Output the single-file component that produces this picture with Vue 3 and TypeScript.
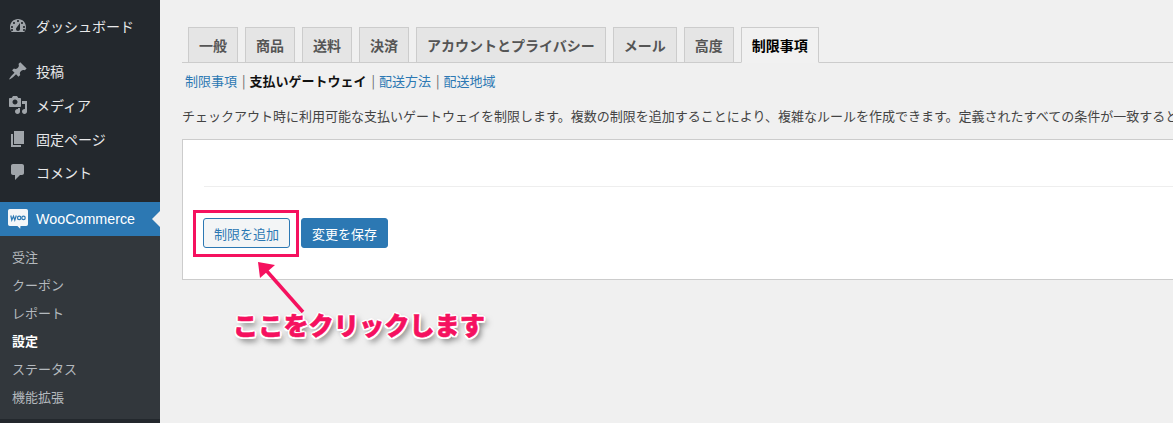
<script setup lang="ts">
const tabs = ['一般', '商品', '送料', '決済', 'アカウントとプライバシー', 'メール', '高度', '制限事項']
const subs = ['受注', 'クーポン', 'レポート', '設定', 'ステータス', '機能拡張']
</script>

<template>
  <div class="page">
    <aside class="side">
      <ul class="menu first">
        <li class="item">
          <svg class="ico" viewBox="0 0 20 20"><path fill-rule="evenodd" d="M3.760 16h12.480c1.100-1.370 1.760-3.110 1.760-5 0-4.420-3.580-8-8-8s-8 3.580-8 8c0 1.890.66 3.630 1.760 5zM10 4c.55 0 1 .45 1 1s-.45 1-1 1-1-.45-1-1 .45-1 1-1zM6 6c.55 0 1 .45 1 1s-.45 1-1 1-1-.45-1-1 .45-1 1-1zm8 0c.55 0 1 .45 1 1s-.45 1-1 1-1-.45-1-1 .45-1 1-1zm-5.370 5.550L12 7v6c0 1.100-.9 2-2 2s-2-.9-2-2c0-.57.24-1.080.63-1.450zM4 10c.55 0 1 .45 1 1s-.45 1-1 1-1-.45-1-1 .45-1 1-1zm12 0c.55 0 1 .45 1 1s-.45 1-1 1-1-.45-1-1 .45-1 1-1zm-12 3c.55 0 1 .45 1 1s-.45 1-1 1-1-.45-1-1 .45-1 1-1zm12 0c.55 0 1 .45 1 1s-.45 1-1 1-1-.45-1-1 .45-1 1-1z"/></svg>
          <span>ダッシュボード</span>
        </li>
      </ul>
      <ul class="menu second">
        <li class="item">
          <svg class="ico" viewBox="0 0 20 20"><path d="M10.440 3.020l1.820-1.820 6.360 6.350-1.830 1.820c-1.050-.68-2.480-.57-3.410.36l-.75.75c-.92.93-1.040 2.350-.35 3.410l-1.830 1.820-2.410-2.410-2.800 2.790c-.42.42-3.380 2.710-3.800 2.290s1.860-3.390 2.280-3.810l2.790-2.790L4.100 9.360l1.830-1.820c1.050.69 2.480.57 3.400-.36l.75-.75c.93-.92 1.050-2.350.36-3.410z"/></svg>
          <span>投稿</span>
        </li>
        <li class="item">
          <svg class="ico" viewBox="0 0 20 20"><path fill-rule="evenodd" d="M13 11V4c0-.55-.45-1-1-1h-1.670L9 1H5L3.670 3H2c-.55 0-1 .45-1 1v7c0 .55.45 1 1 1h10c.55 0 1-.45 1-1zM7 4.500c1.380 0 2.500 1.120 2.500 2.500S8.380 9.500 7 9.500 4.500 8.380 4.500 7 5.620 4.500 7 4.500zM14 6h5v10.500c0 1.380-1.120 2.500-2.500 2.500S14 17.880 14 16.500s1.120-2.500 2.500-2.500c.17 0 .34.020.5.050V9h-3V6zm-4 8.050V13h2v3.500c0 1.380-1.120 2.500-2.500 2.500S7 17.880 7 16.500 8.120 14 9.500 14c.17 0 .34.020.5.050z"/></svg>
          <span>メディア</span>
        </li>
        <li class="item">
          <svg class="ico" viewBox="0 0 20 20"><path d="M6 15V2h10v13H6zm-1 1h8v2H3V5h2v11z"/></svg>
          <span>固定ページ</span>
        </li>
        <li class="item">
          <svg class="ico" viewBox="0 0 20 20"><path d="M5 2h9c1.100 0 2 .9 2 2v7c0 1.100-.9 2-2 2h-2l-5 5v-5H5c-1.100 0-2-.9-2-2V4c0-1.100.9-2 2-2z"/></svg>
          <span>コメント</span>
        </li>
      </ul>
      <div class="woo">
        <svg class="woo-ico" viewBox="0 0 20 20">
          <path d="M1.800 0h16.400A1.800 1.800 0 0 1 20 1.800v13.400a1.800 1.800 0 0 1-1.800 1.800H12.500l-.3 2.800-2.800-2.800H1.800A1.800 1.800 0 0 1 0 15.200V1.800A1.800 1.800 0 0 1 1.800 0z" fill="#f4f6f8" />
          <path d="M2.800 6.500l1 4.500 1.700-3.800 1.300 3.800 1.500-4.500" fill="none" stroke="#2c78b3" stroke-width="1.200" />
          <circle cx="11.200" cy="8.900" r="1.700" fill="none" stroke="#2c78b3" stroke-width="1.200" />
          <circle cx="15.500" cy="8.900" r="1.700" fill="none" stroke="#2c78b3" stroke-width="1.200" />
        </svg>
        <span>WooCommerce</span>
        <i class="notch"></i>
      </div>
      <ul class="sub">
        <li v-for="s in subs" :key="s" :class="{ on: s === '設定' }">{{ s }}</li>
      </ul>
    </aside>

    <main class="main">
      <nav class="tabs">
        <a v-for="t in tabs" :key="t" class="tab" :class="{ active: t === '制限事項' }">{{ t }}</a>
      </nav>
      <div class="links">
        <a>制限事項</a><span class="sep">|</span><b>支払いゲートウェイ</b><span class="sep">|</span><a>配送方法</a><span class="sep">|</span><a>配送地域</a>
      </div>
      <p class="desc">チェックアウト時に利用可能な支払いゲートウェイを制限します。複数の制限を追加することにより、複雑なルールを作成できます。定義されたすべての条件が一致すると</p>
      <section class="card">
        <div class="rule"></div>
        <div class="actions">
          <button class="btn ghost">制限を追加</button>
          <button class="btn primary">変更を保存</button>
        </div>
      </section>
    </main>

    <div class="hl"></div>
    <svg class="arrow" viewBox="0 0 60 60">
      <path d="M49 54L11 11" stroke="#f5115f" stroke-width="3.500" fill="none" />
      <path d="M4 4l17 3L6 20z" fill="#f5115f" />
    </svg>
    <div class="note">ここをクリックします</div>
  </div>
</template>

<style>
html, body { margin: 0; background: #f0f0f0; }
</style>

<style scoped>
.page {
  position: relative;
  display: flex;
  width: 1173px;
  height: 423px;
  overflow: hidden;
  background: #f0f0f0;
  font-family: "Noto Sans CJK JP", "Liberation Sans", sans-serif;
}
.side {
  width: 160px;
  height: 423px;
  flex: none;
  background: #23282d;
  color: #eee;
  font-size: 14px;
}
ul { list-style: none; margin: 0; padding: 0; }
.menu.first { padding-top: 8.500px; }
.menu.second { padding-top: 12px; }
.first .item { height: 34px; }
.item {
  display: flex;
  align-items: center;
  height: 33.700px;
  padding-left: 8px;
  gap: 8px;
  color: #e8e9ea;
}
.ico { width: 20px; height: 20px; fill: #a0a5aa; flex: none; }
.woo {
  position: relative;
  margin-top: 12.700px;
  height: 34px;
  background: #2c78b3;
  color: #fff;
  display: flex;
  align-items: center;
  gap: 8px;
  padding-left: 8px;
  font-family: "Liberation Sans", sans-serif;
  font-size: 14.300px;
}
.woo-ico { width: 20px; height: 20px; flex: none; }
.notch {
  position: absolute;
  right: 0;
  top: 9px;
  border: 8px solid transparent;
  border-right-color: #f0f0f0;
  border-left: 0;
}
.sub {
  background: #32373c;
  padding: 7px 0 8px;
  font-size: 13px;
  color: #b4b9be;
}
.sub li { height: 28px; line-height: 28px; padding-left: 12px; }
.sub li.on { color: #fff; font-weight: 700; }
.main { flex: 1; min-width: 0; padding: 27px 0 0 22px; }
.tabs {
  display: flex;
  gap: 7px;
  padding-left: 6px;
  height: 35px;
  border-bottom: 1px solid #ccc;
}
.tab {
  box-sizing: border-box;
  height: 36px;
  padding: 0 10px;
  border: 1px solid #ccc;
  background: #e5e5e5;
  color: #555;
  font-size: 14px;
  font-weight: 700;
  line-height: 34px;
  white-space: nowrap;
}
.tab.active {
  background: #f1f1f1;
  border-bottom-color: #f1f1f1;
  color: #000;
}
.links {
  margin: 8px 0 0 3px;
  font-size: 13px;
  line-height: 20px;
  color: #2c78b3;
  white-space: nowrap;
}
.links b { color: #111; font-weight: 700; }
.sep { color: #666; margin: 0 4px 0 5px; }
.desc {
  margin: 16px 0 0;
  font-size: 13px;
  line-height: 18px;
  color: #444;
  white-space: nowrap;
}
.card {
  box-sizing: border-box;
  margin-top: 14px;
  width: 1000px;
  height: 141px;
  background: #fff;
  border: 1px solid #ccc;
  padding: 46px 0 0 21px;
}
.rule { border-top: 1px solid #eee; }
.actions { display: flex; gap: 11px; margin: 31px 0 0 -1px; }
.btn {
  box-sizing: border-box;
  height: 30px;
  border-radius: 3px;
  font-family: inherit;
  font-size: 13px;
  padding: 0;
  width: 87px;
}
.ghost { background: #f3f5f6; border: 1px solid #2c78b3; color: #2c78b3; }
.primary { background: #2c78b3; border: 1px solid #2c78b3; color: #fff; }
.hl {
  position: absolute;
  left: 193px;
  top: 210px;
  width: 106px;
  height: 47px;
  box-sizing: border-box;
  border: 3px solid #f5115f;
}
.arrow {
  position: absolute;
  left: 254px;
  top: 258px;
  width: 60px;
  height: 60px;
}
.note {
  position: absolute;
  left: 233px;
  top: 305px;
  font-size: 25.200px;
  line-height: 38px;
  font-weight: 900;
  color: #f5115f;
  white-space: nowrap;
  -webkit-text-stroke: 0.600px #f5115f;
  text-shadow:
    2px 0 0 #fff, -2px 0 0 #fff, 0 2px 0 #fff, 0 -2px 0 #fff,
    1.500px 1.500px 0 #fff, -1.500px 1.500px 0 #fff, 1.500px -1.500px 0 #fff, -1.500px -1.500px 0 #fff,
    3px 4px 6px rgba(0, 0, 0, .6);
}
</style>
